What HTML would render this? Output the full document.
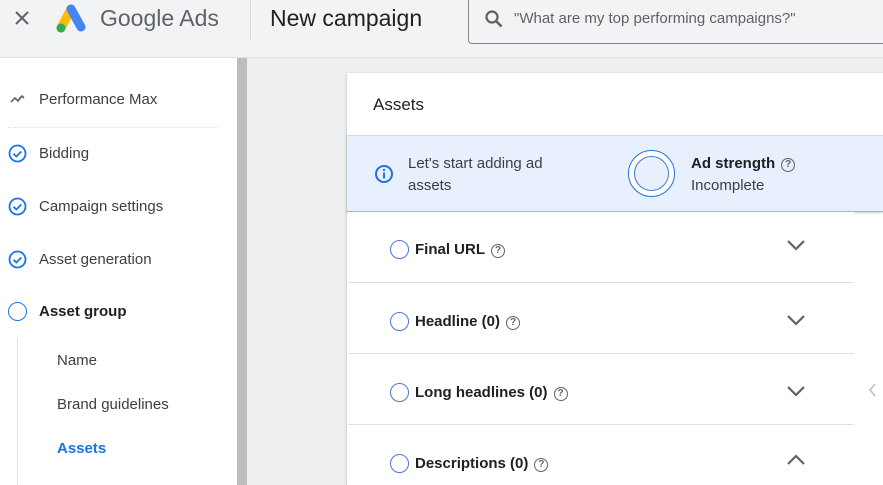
<!DOCTYPE html>
<html style="width:883px;height:485px;overflow:hidden"><head><meta charset="utf-8"><style>
*{margin:0;padding:0;box-sizing:border-box}
body{width:883px;height:485px;overflow:hidden;background:#f1f3f4;font-family:"Liberation Sans",Arial,sans-serif;position:relative;color:#3c4043}
.a{position:absolute}
.t{font-size:15px;color:#3c4043;white-space:nowrap}
.row{position:absolute;left:348px;width:506px;height:71px;border-bottom:1px solid #e0e0e0;background:#fff}
.row .c{position:absolute;left:42px;top:29px;width:19px;height:19px;border:1.3px solid #4a78c9;border-radius:50%}
.row .l{position:absolute;left:67px;top:30px;font-size:15px;font-weight:bold;color:#202124;white-space:nowrap}
.row svg.ch{position:absolute;left:438px;top:30px}
.q{display:inline-block;width:14px;height:14px;border:1.4px solid #5f6368;border-radius:50%;font-size:10px;line-height:11px;text-align:center;font-weight:bold;color:#5f6368;vertical-align:1px;margin-left:6px}
</style></head><body>
<div class="a" style="left:0;top:0;width:883px;height:58px;background:#f1f3f4;border-bottom:1px solid #e3e3e3"></div>
<svg class="a" style="left:14px;top:10px" width="16" height="16" viewBox="0 0 16 16"><path d="M2 2L14 14M14 2L2 14" stroke="#5f6368" stroke-width="2"/></svg>
<svg class="a" style="left:53px;top:3px" width="36" height="30" viewBox="0 0 36 30"><path d="M8 25L18 6" stroke="#fbbc04" stroke-width="9" stroke-linecap="round"/><path d="M18 6L28 24" stroke="#4285f4" stroke-width="9" stroke-linecap="round"/><circle cx="8" cy="25" r="4.5" fill="#34a853"/></svg>
<div class="a" style="left:100px;top:5px;font-size:23px;color:#5f6368">Google Ads</div>
<div class="a" style="left:250px;top:0;width:1px;height:40px;background:#dadce0"></div>
<div class="a" style="left:270px;top:5px;font-size:23px;color:#202124">New campaign</div>
<div class="a" style="left:468px;top:-4px;width:420px;height:48px;border:1px solid #80868b;border-radius:4px"></div>
<svg class="a" style="left:484px;top:9px" width="20" height="20" viewBox="0 0 20 20"><circle cx="8" cy="8" r="5.5" stroke="#5f6368" stroke-width="2.2" fill="none"/><path d="M12 12L17.5 17.5" stroke="#5f6368" stroke-width="2.6"/></svg>
<div class="a" style="left:514px;top:10px;font-size:15px;color:#5f6368">"What are my top performing campaigns?"</div>
<div class="a" style="left:0;top:58px;width:237px;height:427px;background:#fff"></div>
<div class="a" style="left:237px;top:58px;width:10px;height:427px;background:#bdbdbd"></div>
<div class="a" style="left:247px;top:58px;width:636px;height:427px;background:#eeeff0"></div>
<svg class="a" style="left:10px;top:93px" width="16" height="12" viewBox="0 0 16 12"><path d="M1 9L5 5L8 8L12 3M9 6l3-3 2 2" stroke="#5f6368" stroke-width="1.6" fill="none"/></svg>
<div class="a t" style="left:39px;top:91px">Performance Max</div>
<div class="a" style="left:8px;top:127px;width:210px;border-top:1px dotted #ddd"></div>
<svg class="a" style="left:8px;top:144px" width="19" height="19" viewBox="0 0 19 19"><circle cx="9.5" cy="9.5" r="8" stroke="#1a73e8" stroke-width="1.8" fill="none"/><path d="M5.5 9.7l2.8 2.8 5-5" stroke="#1a73e8" stroke-width="1.8" fill="none"/></svg>
<div class="a t" style="left:39px;top:145px">Bidding</div>
<svg class="a" style="left:8px;top:197px" width="19" height="19" viewBox="0 0 19 19"><circle cx="9.5" cy="9.5" r="8" stroke="#1a73e8" stroke-width="1.8" fill="none"/><path d="M5.5 9.7l2.8 2.8 5-5" stroke="#1a73e8" stroke-width="1.8" fill="none"/></svg>
<div class="a t" style="left:39px;top:198px">Campaign settings</div>
<svg class="a" style="left:8px;top:250px" width="19" height="19" viewBox="0 0 19 19"><circle cx="9.5" cy="9.5" r="8" stroke="#1a73e8" stroke-width="1.8" fill="none"/><path d="M5.5 9.7l2.8 2.8 5-5" stroke="#1a73e8" stroke-width="1.8" fill="none"/></svg>
<div class="a t" style="left:39px;top:251px">Asset generation</div>
<div class="a" style="left:8px;top:302px;width:19px;height:19px;border:1.8px solid #1a73e8;border-radius:50%"></div>
<div class="a t" style="left:39px;top:303px;font-weight:bold;color:#202124">Asset group</div>
<div class="a" style="left:17px;top:338px;width:1px;height:147px;background:#e0e0e0"></div>
<div class="a t" style="left:57px;top:352px">Name</div>
<div class="a t" style="left:57px;top:396px">Brand guidelines</div>
<div class="a t" style="left:57px;top:440px;font-weight:bold;color:#1a73e8">Assets</div>
<div class="a" style="left:347px;top:73px;width:536px;height:412px;background:#fff;box-shadow:0 1px 3px rgba(0,0,0,.25)"></div>
<div class="a" style="left:373px;top:95px;font-size:17px;color:#202124">Assets</div>
<div class="a" style="left:347px;top:135px;width:536px;height:77px;background:#e8f0fe;border-top:1px solid #d2dbe8;border-bottom:1px solid #aab4c0;box-shadow:0 1px 2px rgba(0,0,0,.2)"></div>
<svg class="a" style="left:374px;top:164px" width="20" height="20" viewBox="0 0 20 20"><circle cx="10" cy="10" r="8" stroke="#1a73e8" stroke-width="2" fill="none"/><rect x="9" y="8.5" width="2" height="6" fill="#1a73e8"/><rect x="9" y="5" width="2" height="2" fill="#1a73e8"/></svg>
<div class="a" style="left:408px;top:153px;font-size:15px;line-height:22px;color:#3c4043">Let's start adding ad<br>assets</div>
<div class="a" style="left:628px;top:150px;width:47px;height:47px;border:1.5px solid #1a73e8;border-radius:50%;background:#fff"></div>
<div class="a" style="left:634px;top:156px;width:35px;height:35px;border:1.5px solid #4a78c9;border-radius:50%;background:#e8f0fe"></div>
<div class="a" style="left:691px;top:153px;font-size:15px;line-height:22px;color:#3c4043"><b style="color:#202124">Ad strength</b><span class="q">?</span><br>Incomplete</div>
<div class="a" style="left:853px;top:213px;width:1px;height:272px;background:#e0e0e0"></div>
<div class="row" style="top:212px;height:71px"><div class="c" style="top:28px"></div><div class="l" style="top:29px">Final URL<span class="q">?</span></div><svg class="ch" style="top:26px" width="20" height="14" viewBox="0 0 20 14"><path d="M2 3l8 8 8-8" stroke="#5f6368" stroke-width="2.2" fill="none"/></svg></div>
<div class="row" style="top:283px"><div class="c"></div><div class="l">Headline (0)<span class="q">?</span></div><svg class="ch" width="20" height="14" viewBox="0 0 20 14"><path d="M2 3l8 8 8-8" stroke="#5f6368" stroke-width="2.2" fill="none"/></svg></div>
<div class="row" style="top:354px"><div class="c"></div><div class="l">Long headlines (0)<span class="q">?</span></div><svg class="ch" width="20" height="14" viewBox="0 0 20 14"><path d="M2 3l8 8 8-8" stroke="#5f6368" stroke-width="2.2" fill="none"/></svg></div>
<div class="row" style="top:425px;height:60px;border-bottom:none"><div class="c"></div><div class="l">Descriptions (0)<span class="q">?</span></div><svg class="ch" style="top:28px" width="20" height="14" viewBox="0 0 20 14"><path d="M2 11l8-8 8 8" stroke="#5f6368" stroke-width="2.2" fill="none"/></svg></div>
<svg class="a" style="left:867px;top:382px" width="10" height="16" viewBox="0 0 10 16"><path d="M8 2L3 8l5 6" stroke="#bdbdbd" stroke-width="1.5" fill="none"/></svg>
</body></html>
